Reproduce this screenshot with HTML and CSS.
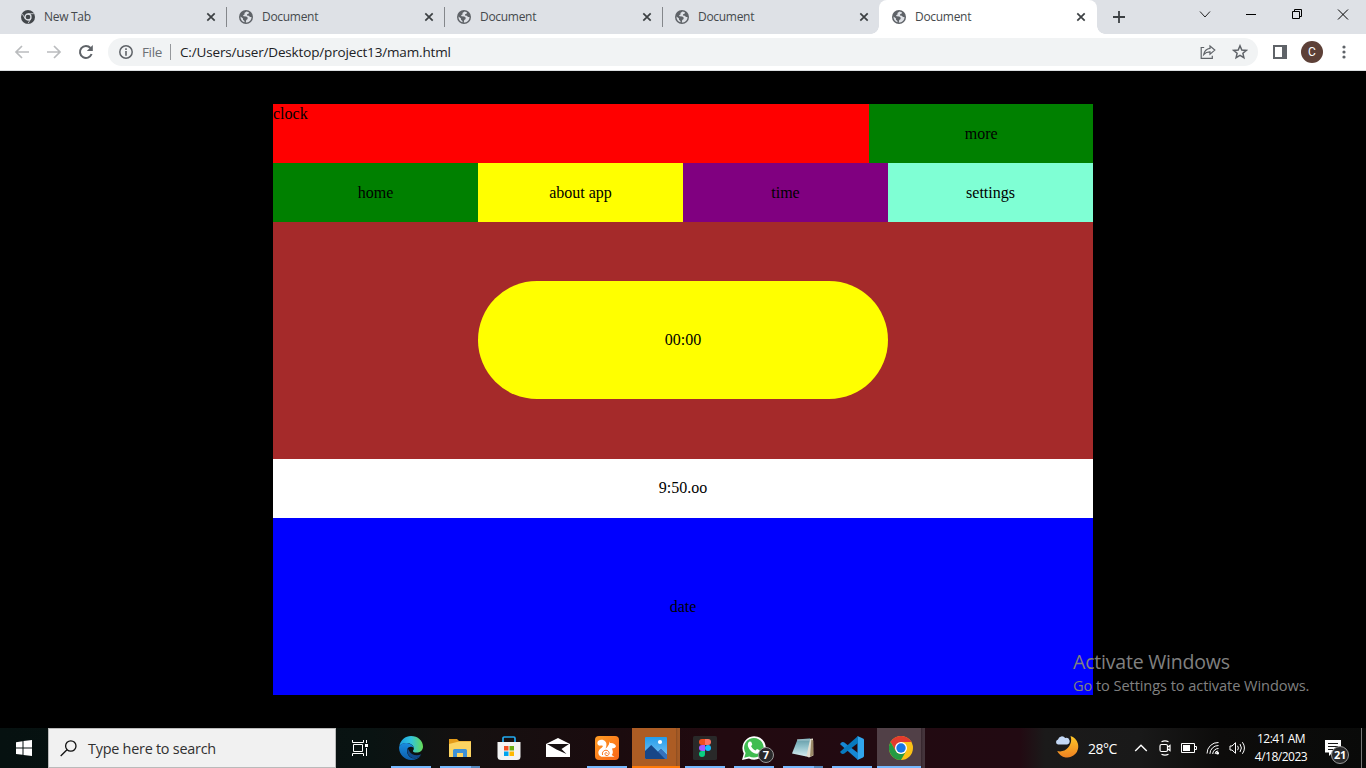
FILE: index.html
```html
<!DOCTYPE html>
<html lang="en">
<head>
<meta charset="utf-8">
<title>Document</title>
<link rel="stylesheet" href="styles.css">
</head>
<body>
<svg width="0" height="0" class="defs" aria-hidden="true">
  <defs>
    <symbol id="globe" viewBox="0 0 14 14"><circle cx="7" cy="7" r="7" fill="#5f6368"/><path d="M7.6 1.4 5.4 3.1 5.7 4.3 4.1 5.2 4.5 6.3 7.3 6.4 8.8 7.7 8.4 9.3 7.2 9.9 6.8 12.5C9.9 12.5 12.6 10 12.5 6.9L11 7.1 9.8 5.8 8 5.5 8.1 4.2 9.8 3.5 9.9 2.2ZM1.5 6.4C1.3 9.2 3.1 11.7 5.4 12.3L5.5 10.9 4 9.8 4 8.5Z" fill="#dee1e6"/></symbol>
    <symbol id="close" viewBox="0 0 10 10"><path d="M1.3 1.3 8.7 8.7M8.7 1.3 1.3 8.7" stroke="#3c4043" stroke-width="1.7" fill="none"/></symbol>
  </defs>
</svg>

<header class="tabs">
  <div class="tab">
    <svg class="fav" viewBox="0 0 14 14"><circle cx="7" cy="7" r="7" fill="#42464a"/><circle cx="7" cy="7" r="3" fill="#42464a" stroke="#dee1e6" stroke-width="1.3"/><path d="M7 3.7H12.8M4.1 8.6 1.3 3.8M9.9 8.6 7 13.4" stroke="#dee1e6" stroke-width=".8"/></svg>
    <span>New Tab</span><svg class="x"><use href="#close"/></svg>
  </div>
  <div class="tab"><svg class="fav"><use href="#globe"/></svg><span>Document</span><svg class="x"><use href="#close"/></svg></div>
  <div class="tab"><svg class="fav"><use href="#globe"/></svg><span>Document</span><svg class="x"><use href="#close"/></svg></div>
  <div class="tab last"><svg class="fav"><use href="#globe"/></svg><span>Document</span><svg class="x"><use href="#close"/></svg></div>
  <div class="tab active"><svg class="fav"><use href="#globe"/></svg><span>Document</span><svg class="x"><use href="#close"/></svg></div>
  <svg class="plus" viewBox="0 0 12 12"><path d="M6 0V12M0 6H12" stroke="#3c4043" stroke-width="1.8"/></svg>
  <div class="wincontrols">
    <svg width="46" height="30"><path d="M18 11.5 23 17 28 11.5" fill="none" stroke="#222" stroke-width="1"/></svg>
    <svg width="46" height="30"><path d="M18 14.5H28" stroke="#000"/></svg>
    <svg width="46" height="30"><path d="M18.5 11.5H25.5V18.5H18.5ZM20.5 11.5V9.5H27.5V16.5H25.5" fill="none" stroke="#000"/></svg>
    <svg width="46" height="30"><path d="M18 9.5 28 19.5M28 9.5 18 19.5" stroke="#000"/></svg>
  </div>
</header>

<nav class="toolbar">
  <svg class="nav" viewBox="0 0 16 16"><path d="M15 8H2M8 2 2 8 8 14" fill="none" stroke="#babcbe" stroke-width="1.7"/></svg>
  <svg class="nav" viewBox="0 0 16 16"><path d="M1 8H14M8 2 14 8 8 14" fill="none" stroke="#babcbe" stroke-width="1.7"/></svg>
  <svg class="nav" viewBox="0 0 16 16"><path d="M13.6 10A6 6 0 1 1 12.5 4" fill="none" stroke="#5f6368" stroke-width="2"/><path d="M14.8 1V7H8.8Z" fill="#5f6368"/></svg>
  <div class="omnibox">
    <svg width="14" height="14" viewBox="0 0 14 14"><circle cx="7" cy="7" r="6.2" fill="none" stroke="#5f6368" stroke-width="1.5"/><path d="M7 6V10.7M7 3.3V5" stroke="#5f6368" stroke-width="1.6"/></svg>
    <span class="scheme">File</span><i class="bar"></i><span class="url">C:/Users/user/Desktop/project13/mam.html</span>
    <svg class="share" width="16" height="16" viewBox="0 0 16 16"><path d="M4.2 3.5H1.2V14.3H12.3V11.7M10 2 14.8 6.1 10 10.3V7.9C7 7.8 5.3 8.8 3.7 10.5 4.4 7 6.4 4.8 10 4.4Z" fill="none" stroke="#5f6368" stroke-width="1.2"/></svg>
    <svg width="16" height="16" viewBox="0 0 16 16"><path d="M8 1.8 9.8 6 14.3 6.4 10.9 9.3 11.9 13.7 8 11.4 4.1 13.7 5.1 9.3 1.7 6.4 6.2 6Z" fill="none" stroke="#5f6368" stroke-width="1.5"/></svg>
  </div>
  <svg class="panel" width="14" height="14"><path d="M1 1H13V13H1Z" fill="none" stroke="#5f6368" stroke-width="2"/><path d="M9 0H14V14H9Z" fill="#5f6368"/></svg>
  <b class="avatar">C</b>
  <svg class="menu" width="4" height="14"><g fill="#5f6368"><circle cx="2" cy="2" r="1.6"/><circle cx="2" cy="7" r="1.6"/><circle cx="2" cy="12" r="1.6"/></g></svg>
</nav>

<main class="page">
  <section class="app">
    <div class="top"><div class="clock">clock</div><div class="cell green">more</div></div>
    <div class="links"><div class="cell green">home</div><div class="cell yellow">about app</div><div class="cell purple">time</div><div class="cell aqua">settings</div></div>
    <div class="cell face"><div class="cell pill">00:00</div></div>
    <div class="cell white">9:50.oo</div>
    <div class="cell blue">date</div>
  </section>
  <aside class="watermark"><p class="wm-title">Activate Windows</p><p class="wm-text">Go to Settings to activate Windows.</p></aside>
</main>

<footer class="taskbar">
  <div class="start"><svg width="16" height="16"><path d="M0 2.2 6.5 1.3V7.5H0ZM7.5 1.1 16 0V7.5H7.5ZM0 8.5H6.5V14.8L0 13.9ZM7.5 8.5H16V16L7.5 14.9Z" fill="#fff"/></svg></div>
  <div class="search"><svg width="17" height="17"><circle cx="10.8" cy="6" r="5.2" fill="none" stroke="#111" stroke-width="1.3"/><path d="M7 9.7.7 16" stroke="#111" stroke-width="1.3"/></svg><span>Type here to search</span></div>
  <div class="slot view"><svg width="16" height="16"><path d="M.5 0V2.5H11.5V0M.5 16V13.5H11.5V16M1.5 4.5H10.5V11.5H1.5ZM14.5 0V3M14.5 8V16" fill="none" stroke="#fff"/><path d="M13 4H16V7H13Z" fill="#fff"/></svg></div>
  <div class="apps">
    <div class="slot run"><svg width="24" height="24" viewBox="0 0 24 24">
      <defs><linearGradient id="e1" x1="0" x2="1"><stop stop-color="#1ba1e2"/><stop offset=".5" stop-color="#32c4dc"/><stop offset="1" stop-color="#66dc55"/></linearGradient><linearGradient id="e2" x1="0" y1="0" x2="0" y2="1"><stop stop-color="#1a8de0"/><stop offset="1" stop-color="#0c5dab"/></linearGradient></defs>
      <path d="M.3 10C1.5 4 6.3 0 12 0 19 0 24 5 24 10.5 24 14.4 21 16.6 17.5 16.6 15 16.6 13.6 15.6 14 14.7 15.5 13.2 15 10.8 13.4 9.3 10 6 3.5 6.5.3 10Z" fill="url(#e1)"/>
      <path d="M.2 10.5C2 7.5 5.5 6.5 9 7.2 12 7.8 14.5 10 14.8 12 13 10 9.5 10.2 8.3 13 7.1 16.5 9.5 21.3 14 22.3 17 23 20 21 22 19.2 19.8 22.5 16.3 24.1 12 24 5 24-.8 17.5.2 10.5Z" fill="url(#e2)"/>
      <path d="M8.7 12.2C7 16.5 10 21.7 15.5 22.4 18.5 22.4 21 20.3 22.3 18.2 18 20.2 12.5 19.3 10.4 15.3Z" fill="#114a8b"/></svg></div>
    <div class="slot run stacked"><svg width="24" height="24" viewBox="0 0 24 24"><path d="M1 3H9L11 5H23V8H1Z" fill="#e49b19"/><path d="M1 8 11 5.5H23V21H1Z" fill="#fcd462"/><path d="M5 21V14.5Q5 13 6.5 13H17.5Q19 13 19 14.5V21H15V17H9V21Z" fill="#3d91d6"/></svg></div>
    <div class="slot"><svg width="24" height="24" viewBox="0 0 24 24"><path d="M6 7V2.2Q6 1 7.2 1H16.8Q18 1 18 2.2V7" fill="none" stroke="#22aaf0" stroke-width="1.7"/><path d="M.5 6H23.5V20.5Q23.5 24 20 24H4Q.5 24 .5 20.5Z" fill="#f3f3f3"/><path d="M7 10H11.5V14.5H7Z" fill="#f25022"/><path d="M12.5 10H17V14.5H12.5Z" fill="#6aac12"/><path d="M7 15.5H11.5V20H7Z" fill="#00a4ef"/><path d="M12.5 15.5H17V20H12.5Z" fill="#ffb900"/></svg></div>
    <div class="slot"><svg width="24" height="24" viewBox="0 0 24 24"><path d="M0 8 12 2 24 8V21H0Z" fill="#fff"/><path d="M1 8H23L15.5 13 20.5 18 10.5 13.5Z" fill="#171112"/></svg></div>
    <div class="slot run"><svg width="24" height="24" viewBox="0 0 24 24"><defs><linearGradient id="uc" x1="0" y1="0" x2="1" y2="1"><stop stop-color="#ff9c24"/><stop offset="1" stop-color="#fa6516"/></linearGradient></defs><rect width="24" height="24" rx="4" fill="url(#uc)"/><path d="M14.6 5.2 15 7C18 6.6 20.6 8.3 21 10.2 20.5 12 18.7 12.4 17 12.4L17.6 14.5C18.2 16.5 17.6 18 16.6 19L19.5 20.8H7.5C4.5 20.8 3 18.3 3.4 15.8 3.9 13.4 6.6 12.2 7.8 10.6 8 9.7 7 9.2 5.6 9.6 3.6 9.9 2 8.3 2.4 6.4 2.9 4.3 5.2 3.2 7.6 3.8 10.8 4.6 12 7.4 11.3 10.2L10.6 12.6C12 11.7 13 9.8 14 8.2Z" fill="#fff"/><path d="M7.6 19C6.7 16 9.2 13.6 12 14.4 14.8 15.4 14.8 19 12.2 19.6 10.2 19.8 9.2 17.9 10.4 16.8 11.2 16.2 12.3 16.8 12.2 17.7" fill="none" stroke="#fa741b" stroke-width="1"/></svg></div>
    <div class="slot photos"><svg width="24" height="24" viewBox="0 0 24 24"><defs><linearGradient id="sky" x1="0" y1="0" x2="0" y2="1"><stop stop-color="#229ded"/><stop offset="1" stop-color="#82c4ef"/></linearGradient></defs><rect x="1" y="1" width="22" height="22" rx="1" fill="url(#sky)"/><circle cx="16" cy="6" r="2.1" fill="#fff"/><path d="M1 15 7.2 9 14 15.8 17 13 23 19V22Q23 23 22 23H2Q1 23 1 22Z" fill="#174687"/><path d="M14 15.8 17 13 23 19V23H21Z" fill="#3771bc"/></svg></div>
    <div class="slot run"><svg width="24" height="24" viewBox="0 0 24 24"><rect width="24" height="24" rx="1.5" fill="#292929"/><path d="M12 3H9A3 3 0 0 0 9 9H12Z" fill="#f24e1e"/><path d="M12 3H15A3 3 0 0 1 15 9H12Z" fill="#ff7262"/><path d="M12 9H9A3 3 0 0 0 9 15H12Z" fill="#a259ff"/><circle cx="15" cy="12" r="3" fill="#1abcfe"/><path d="M12 15H9A3 3 0 1 0 12 18Z" fill="#0acf83"/></svg></div>
    <div class="slot run"><svg width="24" height="24" viewBox="0 0 24 24"><path d="M0 24 1.8 17.5A11.7 11.7 0 1 1 7 22.5Z" fill="#fff"/><path d="M2.2 21.8 3.6 17A9.8 9.8 0 1 1 7.3 20.4Z" fill="#40bd51"/><path d="M7.5 5.6 9.2 5.8 10.3 8.5 9.1 10.3C10 12.2 11.5 13.6 13.5 14.4L15 12.9 17.8 14.3C18.3 17 16.3 18 14.2 17.8 9.5 16.8 5.9 12.3 5.8 9 5.8 7.4 6.5 6 7.5 5.6Z" fill="#fff"/></svg><b class="badge">7</b></div>
    <div class="slot run stacked"><svg width="24" height="24" viewBox="0 0 24 24"><defs><linearGradient id="pad" x1="0" y1="0" x2="0" y2="1"><stop stop-color="#5f97a3"/><stop offset=".45" stop-color="#8fc0c9"/><stop offset="1" stop-color="#d6edf0"/></linearGradient></defs><path d="M18.5 3 22 2.4 22.3 19.5 18 21.5 14.5 20Z" fill="#e2ded0"/><path d="M20.3 3.4 22.3 4.6 22.3 19.2 19 20.8Z" fill="#9b8a68"/><path d="M6.5 3.5 19.3 2.3 15.4 20.6 1 17.6Z" fill="url(#pad)"/><path d="M6.5 3.9H19" stroke="#dfeff1" stroke-width="1.2" stroke-dasharray="1 1"/></svg></div>
    <div class="slot run"><svg width="24" height="24" viewBox="0 0 24 24"><path d="M17.5 0 23 2.6Q24 3 24 4V20Q24 21 23 21.4L17.5 24Z" fill="#31a5ed"/><path d="M0 7.9 2 6.1 4 6.2 18 17.1V24L1 9Z" fill="#1688d4"/><path d="M0 16.1 2 17.9 4 17.8 18 6.9V0L1 15Z" fill="#087abf"/></svg></div>
    <div class="slot run chrome"><svg width="24" height="24" viewBox="0 0 24 24"><circle cx="12" cy="12" r="12" fill="#fbc116"/><path d="M1.6 6A12 12 0 0 1 22.4 6H12L6.8 15Z" fill="#e33b2e"/><path d="M1.6 6 6.8 15A6 6 0 0 0 17.2 15L12 24A12 12 0 0 1 1.6 6Z" fill="#249a43"/><circle cx="12" cy="12" r="6" fill="#fff"/><circle cx="12" cy="12" r="4.7" fill="#1976e5"/></svg></div>
  </div>
  <div class="tray">
    <div class="weather"><svg width="24" height="24" viewBox="0 0 24 24"><defs><linearGradient id="moon" x1="0" y1="0" x2="0" y2="1"><stop stop-color="#ffc928"/><stop offset="1" stop-color="#ee8122"/></linearGradient></defs><path d="M15.5 0A11 11 0 1 1 2.2 15C11 17.5 18.5 8.2 15.5 0Z" fill="url(#moon)"/><path d="M3 8.6A2.7 2.7 0 0 1 3 3.4 4 4 0 0 1 10.2 2.1 3.4 3.4 0 0 1 12.2 8.6Z" fill="#c4d8f5"/></svg><span>28°C</span></div>
    <div class="ti"><svg width="14" height="8"><path d="M1.2 7 7 1.2 12.8 7" fill="none" stroke="#fff" stroke-width="1.4"/></svg></div>
    <div class="ti"><svg width="12" height="16"><path d="M2.5 4.5H7Q8.5 4.5 8.5 6V10Q8.5 11.5 7 11.5H2.5Q1 11.5 1 10V6Q1 4.5 2.5 4.5ZM8.5 7.3 11 5.5V10.5L8.5 8.7M2.5 1.7Q6 .1 9.5 1.7M2.5 14.3Q6 15.9 9.5 14.3" fill="none" stroke="#fff" stroke-width="1.2"/></svg></div>
    <div class="ti"><svg width="16" height="10"><path d="M.5.5H13.5V9.5H.5ZM13.5 3.5H15.5V6.5H13.5" fill="none" stroke="#fff"/><path d="M2 2H9V8H2Z" fill="#fff"/></svg></div>
    <div class="ti"><svg width="14" height="14"><path d="M1 12.5A11 11 0 0 1 12.5 1.5M3.9 12.9A8.5 8.5 0 0 1 12.5 4.5M6.7 13A5.7 5.7 0 0 1 12.5 7.5M9.1 13A3 3 0 0 1 12.2 10" fill="none" stroke="#fff"/><circle cx="11.6" cy="12.2" r="1.4" fill="#fff"/></svg></div>
    <div class="ti"><svg width="17" height="14"><path d="M1 5H3L6.5 1.7V12.3L3 9H1Z M8.6 4.8Q10.2 7 8.6 9.2M11 3Q13.8 7 11 11M13.4 1.2Q17.5 7 13.4 12.8" fill="none" stroke="#fff"/></svg></div>
    <div class="time"><span>12:41 AM</span><span>4/18/2023</span></div>
    <div class="notif"><svg width="16" height="16"><path d="M0 0H16V12.5H7.5L4 16V12.5H0Z" fill="#fff"/><path d="M3 3.5H13M3 6.5H13M3 9.5H9" stroke="#181818"/></svg><b class="badge big">21</b></div>
  </div>
</footer>
</body>
</html>
```
FILE: styles.css
```css
* { box-sizing: border-box; }
body { margin: 0; width: 1366px; height: 768px; display: flex; flex-direction: column; overflow: hidden; background: #000; font-family: "Open Sans", "Noto Sans", sans-serif; }
svg { display: block; flex: none; }
.defs { position: absolute; }
p { margin: 0; }

.tabs { height: 34px; flex: none; display: flex; background: #dee1e6; padding-left: 9px; }
.tab { width: 218px; height: 34px; display: flex; align-items: center; padding: 0 11px 0 12px; font-size: 12px; line-height: 16px; letter-spacing: -.3px; color: #45494d; background: linear-gradient(#84878b, #84878b) right 7px / 1px 20px no-repeat; }
.tab span { padding-bottom: 1px; }
.tab.last { background: none; width: 216px; padding-right: 10px; }
.fav { width: 14px; height: 14px; margin-right: 9px; }
.tab .x { width: 10px; height: 10px; margin-left: auto; }
.tab.active { background: #fff; border-radius: 8px 8px 0 0; position: relative; padding: 0 11px 0 13px; }
.tab.active::before, .tab.active::after { content: ""; position: absolute; bottom: 0; width: 8px; height: 8px; }
.tab.active::before { left: -8px; background: radial-gradient(circle at 0 0, transparent 7.5px, #fff 8px); }
.tab.active::after { right: -8px; background: radial-gradient(circle at 100% 0, transparent 7.5px, #fff 8px); }
.plus { width: 12px; height: 12px; margin: 11px 0 0 16px; }
.wincontrols { margin-left: auto; display: flex; }

.toolbar { height: 37px; flex: none; background: #fff; border-bottom: 1px solid #dcdfe1; display: flex; align-items: center; padding-left: 14px; }
.nav { width: 16px; height: 16px; margin-right: 16px; }
.omnibox { width: 1150px; height: 28px; margin-left: -2px; border-radius: 14px; background: #f1f3f4; display: flex; align-items: center; padding: 0 10px 0 11px; font-size: 14px; }
.scheme { width: 28px; margin-left: 9px; color: #6c7075; letter-spacing: -.35px; font-size: 13.5px; }
.bar { width: 1px; height: 16px; background: #95989c; }
.url { margin-left: 9px; color: #202124; font-size: 13.5px; letter-spacing: -.16px; white-space: nowrap; }
.share { margin: 0 16px 0 auto; }
.panel { margin-left: 15px; }
.avatar { width: 22px; height: 22px; margin-left: 14px; border-radius: 50%; background: #5d4037; color: #fff; display: grid; place-items: center; font: 12px Roboto, sans-serif; }
.menu { margin-left: 19px; }

.page { height: 657px; flex: none; position: relative; display: flex; justify-content: center; padding-top: 33px; background: #000; color: #000; font: 16px/18px "Liberation Serif", serif; }
.app { width: 820px; height: 591px; display: grid; grid-template-rows: 59px 59px 237px 59px 177px; }
.top { display: grid; grid-template-columns: 596.4px 1fr; }
.links { display: grid; grid-template-columns: repeat(4, 1fr); }
.clock { background: red; padding-top: 1px; }
.cell { display: flex; align-items: center; justify-content: center; }
.green { background: green; }
.yellow { background: yellow; }
.purple { background: purple; }
.aqua { background: aquamarine; }
.face { background: brown; padding-bottom: 1px; }
.pill { width: 410px; height: 118px; border-radius: 59px; background: yellow; }
.white { background: #fff; padding-bottom: 1px; }
.blue { background: blue; }
.watermark { position: absolute; left: 1073px; top: 578px; color: #808080; font-family: "Open Sans", sans-serif; white-space: nowrap; }
.wm-title { font-size: 19.5px; line-height: 26px; letter-spacing: -.2px; }
.wm-text { font-size: 14.6px; line-height: 20px; letter-spacing: -.08px; }

.taskbar { height: 40px; flex: none; display: flex; color: #fff; background: linear-gradient(90deg, #061110 0, #091312 370px, #151010 470px, #1b0b0e 620px, #220a10 720px, #220a12 1020px, #1b1a1a 1045px, #191919 1140px, #0d0c0b 1220px, #090a09 1366px); }
.start { width: 48px; display: grid; place-items: center; }
.search { width: 288px; background: #f1f1f1; border: 1px solid #bababa; display: flex; align-items: center; padding-left: 11px; color: #303030; font-size: 14.4px; letter-spacing: -.24px; }
.search span { margin-left: 11px; white-space: nowrap; }
.slot { width: 48px; height: 40px; display: grid; place-items: center; position: relative; }
.view { margin-right: 3px; }
.apps { display: flex; gap: 1px; }
.run { background: linear-gradient(#76b9ff, #76b9ff) 4px 38px / 40px 2px no-repeat; }
.stacked { background: linear-gradient(90deg, #76b9ff 31px, #5588bd 31px) 4px 38px / 40px 2px no-repeat; }
.photos { background: linear-gradient(#ff7a08, #ff7a08) 0 38px / 48px 2px no-repeat, linear-gradient(90deg, #ac5c24 44px, #8d4d20 44px, #a45a26 46px); }
.chrome { background: linear-gradient(#76b9ff, #76b9ff) 0 38px / 44px 2px no-repeat, linear-gradient(90deg, #514047 44px, #33232a 44px, #44343b 46px); }
.badge { position: absolute; left: 28px; top: 19px; width: 16px; height: 16px; border-radius: 50%; border: 1px solid #999; background: #29292a; color: #fff; font-size: 11px; line-height: 14px; text-align: center; }
.tray { margin-left: auto; display: flex; align-items: center; }
.weather { width: 74px; display: flex; align-items: center; font-size: 14px; letter-spacing: -.5px; }
.weather span { margin-left: 9px; }
.ti { width: 24px; display: grid; place-items: center; }
.time { width: 64px; height: 40px; display: flex; flex-direction: column; align-items: center; padding-top: 2px; font-size: 12px; line-height: 18px; letter-spacing: -.5px; white-space: nowrap; }
.notif { width: 49px; height: 40px; padding: 12px 0 0 12px; position: relative; border-right: 1px solid #777; margin-right: 4px; }
.badge.big { left: 18px; top: 18px; width: 18px; height: 18px; line-height: 16px; letter-spacing: -.4px; }
```
